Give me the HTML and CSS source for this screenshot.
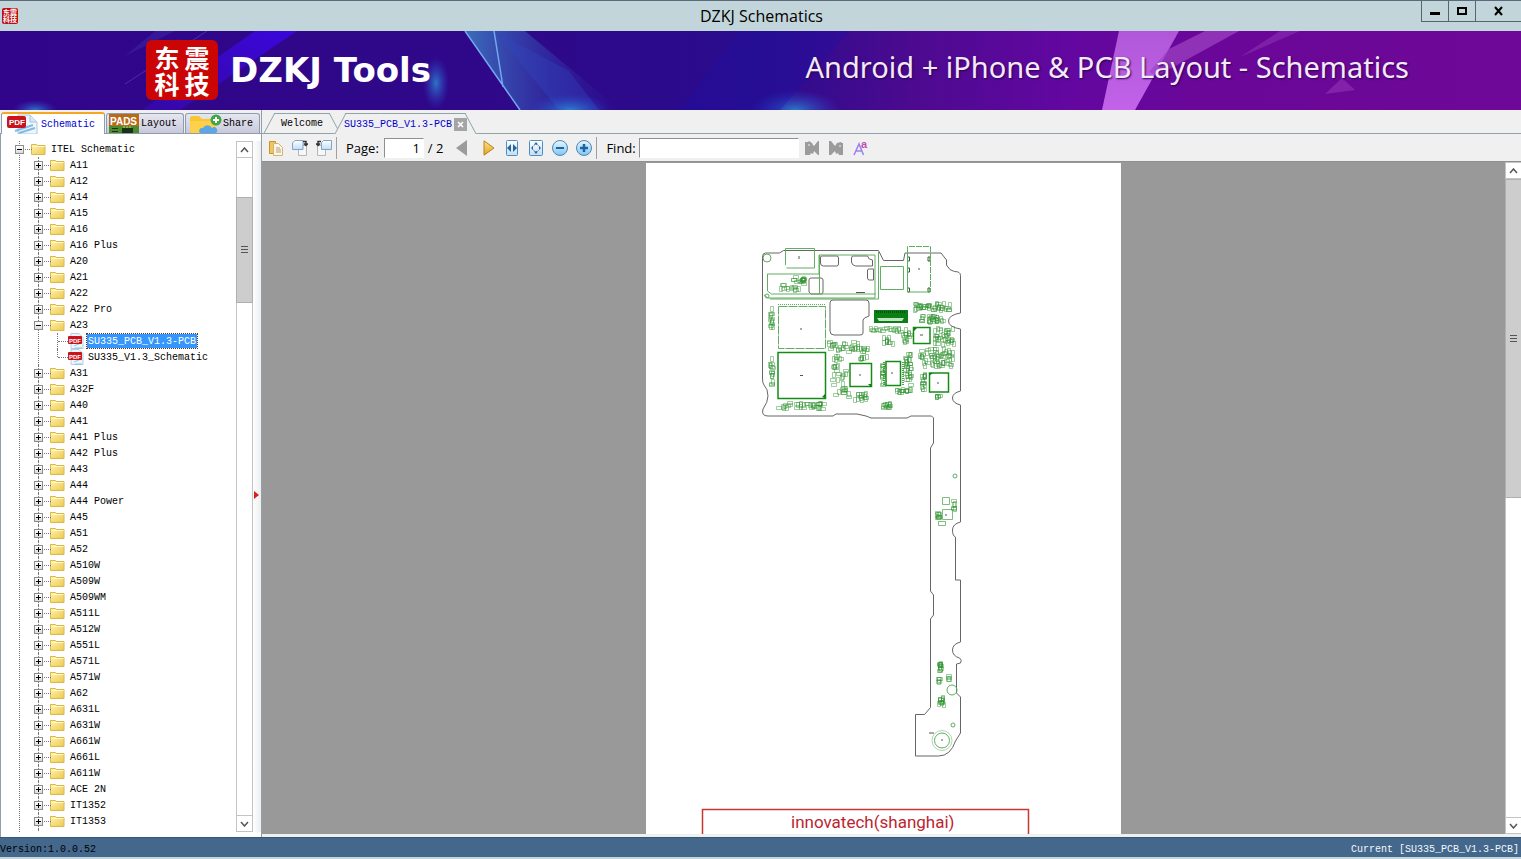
FILE: index.html
```html
<!DOCTYPE html>
<html lang="en">
<head>
<meta charset="utf-8">
<title>DZKJ Schematics</title>
<link rel="stylesheet" href="styles.css">
</head>
<body>
<svg class="defs" aria-hidden="true">
  <defs>
    <linearGradient id="gFold" x1="0" y1="0" x2="1" y2="1"><stop offset="0" stop-color="#fff3b0"/><stop offset="1" stop-color="#ecc94f"/></linearGradient>
    <linearGradient id="gBall" x1="0" y1="0" x2="0" y2="1"><stop offset="0" stop-color="#e9f6ff"/><stop offset="1" stop-color="#7fc4ee"/></linearGradient>
    <linearGradient id="gPage" x1="0" y1="0" x2="0" y2="1"><stop offset="0" stop-color="#fff"/><stop offset="1" stop-color="#c3dcf3"/></linearGradient>
    <linearGradient id="gGold" x1="0" y1="0" x2="0" y2="1"><stop offset="0" stop-color="#ffe28a"/><stop offset="1" stop-color="#e0a21c"/></linearGradient>
    <symbol id="folder" viewBox="0 0 15 13"><path d="M.5 1.500h5l1 1h7.500v9H.5z" fill="url(#gFold)" stroke="#dcb84a"/><path d="M1.500 3.500h12" stroke="#fff8cf"/></symbol>
    <symbol id="pdf" viewBox="0 0 16 16"><path d="M3 .5h8l4 4v11H3z" fill="#eef6fc" stroke="#b5cfe0"/><path d="M6 13l7-3M7 15h7" stroke="#8fc4e8"/><rect y="3" width="14" height="8" rx="1" fill="#c9141e"/><text x="1" y="9.500" font-family="Liberation Sans" font-size="6" font-weight="700" fill="#fff">PDF</text></symbol>
  </defs>
</svg>

<header class="titlebar">
  <div class="app-icon"><span>东震</span><span>科技</span></div>
  <h1>DZKJ Schematics</h1>
  <div class="win-buttons">
    <button aria-label="Minimize"><svg width="12" height="12"><path d="M1 8.500h10" stroke="#000" stroke-width="3"/></svg></button>
    <button aria-label="Maximize"><svg width="12" height="12"><path d="M2 3h8v6H2z" fill="none" stroke="#000" stroke-width="2"/></svg></button>
    <button class="close" aria-label="Close"><svg width="12" height="12"><path d="M2 2l7 8M9 2l-7 8" stroke="#000" stroke-width="2"/></svg></button>
  </div>
</header>

<section class="banner">
  <svg class="art" viewBox="0 0 1521 79" preserveAspectRatio="none" aria-hidden="true">
    <defs>
      <radialGradient id="glow"><stop offset="0" stop-color="#2b9ad8" stop-opacity=".75"/><stop offset="1" stop-color="#2b50d8" stop-opacity="0"/></radialGradient>
      <linearGradient id="tri" x1="0" y1="0" x2="1" y2="0"><stop offset="0" stop-color="#3f7fc4" stop-opacity=".85"/><stop offset="1" stop-color="#2b2bb0" stop-opacity="0"/></linearGradient>
      <linearGradient id="beam" x1="1" y1="0" x2="0" y2="1"><stop offset="0" stop-color="#3a06dc"/><stop offset="1" stop-color="#3a0ac4" stop-opacity=".5"/></linearGradient>
      <linearGradient id="pink" x1="0" y1="0" x2="0" y2="1"><stop offset="0" stop-color="#b057d8"/><stop offset="1" stop-color="#c263ea"/></linearGradient>
    </defs>
    <path d="M255 0h42L180 79h-38z" fill="url(#beam)"/>
    <path d="M207 0L125 53" stroke="#5a48c8" opacity=".6"/>
    <path d="M155 0h20l-50 25z" fill="#3f26a5" opacity=".5"/>
    <ellipse cx="436" cy="52" rx="13" ry="26" fill="url(#glow)"/>
    <ellipse cx="35" cy="79" rx="22" ry="10" fill="url(#glow)"/>
    <path d="M465 0h60l95 79H520z" fill="url(#tri)"/>
    <path d="M465 0l55 79M494 0l9 56" stroke="#72a9ee" stroke-width="1.500"/>
    <path d="M494 0l75 40 30 39h-40z" fill="#3149c0" opacity=".35"/>
    <ellipse cx="795" cy="79" rx="45" ry="20" fill="url(#glow)"/>
    <ellipse cx="570" cy="79" rx="40" ry="16" fill="url(#glow)"/>
    <path d="M740 0L680 79h100L850 0z" fill="#1c12a8" opacity=".3"/>
    <path d="M1119 0h60l-44 79h-33z" fill="url(#pink)"/>
    <path d="M1205 0h34l-82 45-8-4 20-23z" fill="#a045c4" opacity=".7"/>
    <path d="M1280 0h20l-60 26z" fill="#8b30b4" opacity=".6"/>
    <path d="M1342 47l13 12-30 4z" fill="#8b2db4" opacity=".7"/>
  </svg>
  <div class="logo"><span>东</span><span>震</span><span>科</span><span>技</span></div>
  <strong class="brand">DZKJ Tools</strong>
  <p class="tagline">Android + iPhone &amp; PCB Layout - Schematics</p>
</section>

<main class="workspace">
  <aside class="side">
    <nav class="side-tabs">
      <button class="side-tab active"><svg width="31" height="20"><path d="M11 1h12l7 7v12H11z" fill="#eef6fc" stroke="#a9c6da"/><path d="M23 1v7h7" fill="#d6e8f5" stroke="#a9c6da"/><path d="M8 17l18-6M12 19l16-5" stroke="#7fbce8" stroke-width="2"/><rect y="2" width="19" height="12" rx="2" fill="#c9141e"/><text x="2" y="11" class="pdf-label">PDF</text></svg>Schematic</button>
      <button class="side-tab"><svg width="30" height="19"><rect width="30" height="19" fill="#b86a1c"/><text x="1" y="11" class="pads-label">PADS</text><path d="M0 12h30v7H0z" fill="#4a8b2c"/><path d="M13 14h11v5H13zM3 14h6v1H3zM3 17h6v1H3z" fill="#193415"/><path d="M15 12v2M18 12v2M21 12v2" stroke="#d5c46b"/></svg>Layout</button>
      <button class="side-tab share"><svg width="32" height="19"><path d="M0 4q0-2 2-2h7l3 3h14v14H0z" fill="#fbc531"/><path d="M0 7h26v12H2q-2 0-2-2z" fill="#ffd04a"/><path d="M10 19a3 3 0 0 1 3-5 5 5 0 0 1 9 0 3 3 0 0 1 4 5z" fill="#5ba6e6"/><circle cx="26" cy="6" r="5.500" fill="#3fa648"/><path d="M26 3v6M23 6h6" stroke="#fff" stroke-width="2"/></svg>Share</button>
    </nav>
    <div class="tree-pane">
      <ul class="tree" id="tree"></ul>
      <div class="scroll side-scroll">
        <button aria-label="Scroll up"><svg width="9" height="6"><path d="M1 5l3.500-4L8 5" fill="none" stroke="#555" stroke-width="1.500"/></svg></button>
        <div class="track"><div class="thumb"><i></i></div></div>
        <button aria-label="Scroll down"><svg width="9" height="6"><path d="M1 1l3.500 4L8 1" fill="none" stroke="#555" stroke-width="1.500"/></svg></button>
      </div>
      <div class="splitter"><svg width="5" height="8"><path d="M0 0l5 4-5 4z" fill="#d8201a"/></svg></div>
    </div>
  </aside>

  <section class="content">
    <nav class="doc-tabs">
      <button class="doc-tab">Welcome</button>
      <div class="doc-tab active"><a href="#doc">SU335_PCB_V1.3-PCB</a><button class="tab-close" aria-label="Close tab"><svg width="13" height="13"><rect width="13" height="13" fill="#a5a5a5"/><path d="M4 4l5 5M9 4l-5 5" stroke="#fff" stroke-width="1.500"/></svg></button></div>
    </nav>
    <div class="toolbar">
      <button aria-label="Open"><svg width="16" height="16"><path d="M1.500 1.500h6v12h-6z" fill="#f3c55c" stroke="#c8922d"/><path d="M5.500 3.500h5l4 4v8h-9z" fill="#fff6df" stroke="#d3b27a"/><path d="M8 8h4M8 10h5M8 12h5" stroke="#a9a08c"/></svg></button>
      <button aria-label="Rotate left"><svg width="16" height="16"><path d="M6.500 5.500h8v10h-8z" fill="#f7f7f7" stroke="#b4b8bd"/><path d="M3 .5h8v9H.5V3z" fill="url(#gPage)" stroke="#7fa3c9"/><path d="M11 1.500h3v3M12 3.500l2 2 2-2" fill="none" stroke="#333" stroke-width="1.500"/></svg></button>
      <button aria-label="Rotate right"><svg width="16" height="16"><path d="M1.500 5.500h8v10h-8z" fill="#f7f7f7" stroke="#b4b8bd"/><path d="M7.500 .5h8v9h-10V2.500z" fill="url(#gPage)" stroke="#7fa3c9"/><path d="M5 1.500H2v3M0 3.500l2 2 2-2" fill="none" stroke="#333" stroke-width="1.500"/></svg></button>
      <span class="sep"></span>
      <label for="page">Page:</label>
      <input id="page" class="page-input" type="text" value="1">
      <span class="pages">/ 2</span>
      <button class="prev" aria-label="Previous page"><svg width="12" height="16"><path d="M11 0v16L0 8z" fill="#9b9b9b"/></svg></button>
      <button class="next" aria-label="Next page"><svg width="12" height="16"><path d="M1 .8v14.400L11 8z" fill="url(#gGold)" stroke="#b98418"/></svg></button>
      <button aria-label="Fit width"><svg width="16" height="16"><rect x="2.500" y=".5" width="11" height="15" rx="1" fill="url(#gPage)" stroke="#4f8cc4"/><path d="M7 4v8L3 8zM9 4v8l4-4z" fill="#27659e"/></svg></button>
      <button aria-label="Fit page"><svg width="16" height="16"><rect x="1.500" y=".5" width="13" height="15" rx="1" fill="url(#gPage)" stroke="#4f8cc4"/><path d="M8 2l2 2.500H6zM8 14l2-2.500H6zM3 8l2-2v4zM13 8l-2-2v4z" fill="#27659e"/><circle cx="8" cy="8" r="3.500" fill="none" stroke="#27659e" stroke-dasharray="1 1"/></svg></button>
      <button aria-label="Zoom out"><svg width="16" height="16"><circle cx="8" cy="8" r="7.500" fill="url(#gBall)" stroke="#4a88b8"/><path d="M4 8h8" stroke="#1b65a5" stroke-width="2"/></svg></button>
      <button aria-label="Zoom in"><svg width="16" height="16"><circle cx="8" cy="8" r="7.500" fill="url(#gBall)" stroke="#4a88b8"/><path d="M4 8h8M8 4v8" stroke="#1b65a5" stroke-width="2.500"/></svg></button>
      <span class="sep"></span>
      <label for="find">Find:</label>
      <input id="find" class="find-input" type="text">
      <button aria-label="Find previous"><svg width="16" height="16"><path d="M1 2h3l1-1 3 2 1 2 1 1 4-5h1v14h-1l-4-4-1 3-2-1-1 2H1z" fill="#9b9b9b"/><circle cx="5" cy="5" r="1" fill="#d5d5d5"/></svg></button>
      <button aria-label="Find next"><svg width="16" height="16"><path d="M15 3h-1l-1-1-4 1-2 3L3 1H1v14h2l4-4 1 3 2-1 1 2h4z" fill="#9b9b9b"/><circle cx="12" cy="6" r="1" fill="#d5d5d5"/></svg></button>
      <button aria-label="Match case"><svg width="16" height="18"><path d="M2 16L7 5l4.500 11M4 12h6" fill="none" stroke="#9a82ee" stroke-width="1.500"/><text x="9" y="9" class="case-label">a</text></svg></button>
    </div>
    <div class="viewer" id="doc">
      <div class="stage">
        <svg class="sheet" viewBox="646 163 475 671" aria-label="SU335 PCB layout">
          <rect x="646" y="163" width="475" height="671" fill="#fff"/>
          <g fill="none" stroke="#666">
            <path d="M762.500 257q0-4 3-4h14l4-2.500h95l5 10h20l1.500-7.500H941l5.500 7v5q3 6 8 6.500 6 0 6 4V313q-12 2-12 8t12 8V391q-8 2-8 7t8 7V522q-8 2-8 8t3 7v43h5v62q-8 2-8 8t7 8q3 2 1 5l-4 1v29l4 4v36l-5 8q-5 15-17 15H915.500V714.500h9l6-7V619l3-4V595l-3-4V448l3-5V418l-2-2H911l-4 2H871l-5-2-9-2H836l-3 2H768q-7 0-5-7 5-7 5-13 0-7-4-11-1.500-2-1.500-6z"/>
            <path d="M820.500 257q0-1 2-1h14q2 0 2 2v6q0 2-2 2h-13q-3 0-3-3zM851.500 258q0-2 2-2h14q1 4 5 4v6h-17q-4-1-4-4zM809 280q0-2 2-2h10q2 0 2 2v12q0 2-2 2h-10l-2-2zM867.500 270q0-1 2-1h4v11h-4q-2 0-2-2z"/>
            <path d="M830 303q0-3 3-3h33q3 0 3 3v13q-6 2-6 4v13q0 2-3 2h-26q-4 0-4-4z"/>
            <path d="M907.500 257h2v4h-2zM928 257h2v4h-2zM907.500 268h2v4h-2zM907.500 288h2v4h-2zM928 288h2v4h-2z" stroke="#286b28"/>
          </g>
          <g fill="none" stroke="#61ad61">
            <circle cx="767" cy="258" r="4"/><circle cx="767" cy="296" r="2"/>
            <path d="M785.500 265V248.500h29V268h-28M767.500 274H819v-19h56v43H768l-4-3M767.500 274v17l4 3h104M819.500 255v39M878.500 252v47H770M880.500 266.500h23v23h-23zM907.500 252v40h22"/>
            <path d="M907.500 252v-5.500h23V292" stroke-dasharray="6 1"/>
            <path d="M778.500 306.500h47v42h-47z" stroke-dasharray="9 1"/><path d="M778 304.500h48" stroke-dasharray="1 1"/>
            <circle cx="955" cy="476" r="2"/><circle cx="952" cy="690" r="5"/><circle cx="953" cy="725" r="2"/>
            <circle cx="942" cy="740.500" r="7.500"/><circle cx="942" cy="740.500" r="10" opacity=".5"/>
            <path d="M942.500 497.500h7v7h-7zM942.500 509.500h10v10h-10zM938.500 521.500h7v4h-7z" opacity=".8"/>
          </g>
          <g fill="none" stroke="#168a16" stroke-width="1.500">
            <path d="M778 352.500h47.500v46H778zM850 363.500h21.500v23H850zM886 361.500h14.500v24H886zM913.500 327.500h16.500v16h-16.500zM929.500 373h19v19h-19z"/>
            <path d="M884 362v23M903 362v23" stroke-dasharray="1 1"/>
          </g>
          <path d="M874 310h34v13h-34z" fill="#0b7f16"/><path d="M877 318h27l-2 3h-23z" fill="#bfe3bf"/><path d="M876 312h30" stroke="#054f0b" stroke-width="2" stroke-dasharray="1 1"/>
          <path d="M822 397l3-3v4zM929 373h4l-4 3zM914 328h3l-3 3zM868 384h3v3z" fill="#0b7f16"/>
          <g id="parts" fill="none" stroke="#2f932f"></g>
          <path d="M800 375.500h3M801 328v2M799 256v3M860 374v2M892 372v2M920 335h3M938 382v2M918 269h2M946 514v2M942 739v2M856 292.500h9M929 733h5" stroke="#555"/>
          <path d="M702.500 834V809.500h326V834" fill="none" stroke="#c23a32" stroke-width="1.500"/>
          <text x="791" y="828" class="maker">innovatech(shanghai)</text>
        </svg>
      </div>
      <div class="scroll main-scroll">
        <button aria-label="Scroll up"><svg width="9" height="6"><path d="M1 5l3.500-4L8 5" fill="none" stroke="#555" stroke-width="1.500"/></svg></button>
        <div class="track"><div class="thumb"><i></i></div></div>
        <button aria-label="Scroll down"><svg width="9" height="6"><path d="M1 1l3.500 4L8 1" fill="none" stroke="#555" stroke-width="1.500"/></svg></button>
      </div>
    </div>
  </section>
</main>

<footer class="status"><span>Version:1.0.0.52</span><span class="current">Current [SU335_PCB_V1.3-PCB]</span></footer>
<script src="app.js"></script>
</body>
</html>
```

FILE: styles.css
```css
* { box-sizing: border-box; }
body {
  margin: 0;
  height: 100vh;
  display: flex;
  flex-direction: column;
  overflow: hidden;
  background: #c2d5da;
  font-family: "Open Sans", "Noto Sans", sans-serif;
  font-size: 13px;
  color: #000;
}
button { border: 0; padding: 0; background: none; font: inherit; color: inherit; }
a { color: inherit; text-decoration: none; }
svg { display: block; flex: none; }
.defs { position: absolute; width: 0; height: 0; }

.titlebar {
  height: 31px;
  flex: none;
  display: grid;
  grid-template-columns: 1fr auto 1fr;
  align-items: center;
  border-top: 1px solid #5b6a7a;
  padding-left: 2px;
}
.titlebar h1 { margin: 0; font-size: 16px; line-height: 28px; font-weight: 400; }
.app-icon {
  width: 16px;
  height: 16px;
  border-radius: 2px;
  background: #c00a10;
  color: #fff;
  font: 700 7px/7px "Noto Sans CJK SC", sans-serif;
  display: flex;
  flex-direction: column;
  align-items: center;
  justify-content: center;
}
.win-buttons { display: flex; justify-self: end; align-self: start; }
.win-buttons button {
  width: 27px;
  height: 21px;
  display: flex;
  align-items: center;
  justify-content: center;
  border: solid #56646e;
  border-width: 0 0 1px 1px;
}
.win-buttons .close { width: 46px; }

.banner {
  position: relative;
  height: 79px;
  flex: none;
  display: flex;
  align-items: center;
  padding: 0 112px 0 146px;
  background: linear-gradient(90deg, #31058a 0%, #2f0889 30%, #2a0c8c 50%, #4c0a90 60%, #6207a0 70%, #6b0798 80%, #6d0898 100%);
  color: #fff;
}
.art { position: absolute; inset: 0; width: 100%; height: 100%; }
.logo, .brand, .tagline { position: relative; }
.logo {
  width: 72px;
  height: 60px;
  margin-bottom: 2px;
  border-radius: 6px;
  background: #cb0505;
  font: 700 25px/26px "Noto Sans CJK SC", sans-serif;
  display: grid;
  grid-template-columns: auto auto;
  column-gap: 5px;
  place-content: center;
}
.brand { margin: 0 0 2px 12px; font: 700 34px/40px "DejaVu Sans", "Noto Sans", sans-serif; }
.tagline {
  margin: 0 0 8px auto;
  font: 400 29px/40px "Noto Sans", sans-serif;
  color: #f4e9fb;
  text-shadow: 1px 1px 2px #2a0050;
}

.workspace { flex: 1; min-height: 0; display: flex; background: #f0f0f0; }
.side { width: 262px; flex: none; display: flex; flex-direction: column; border-right: 1px solid #8ea0aa; }
.side-tabs { height: 24px; flex: none; display: flex; align-items: flex-end; gap: 1px; padding-left: 1px; border-bottom: 1px solid #8d9db0; }
.side-tab, .doc-tab, .tree, .status { font-family: "Liberation Mono", monospace; font-size: 10px; }
.side-tab {
  height: 20px;
  width: 78px;
  display: flex;
  align-items: center;
  gap: 2px;
  padding-left: 2px;
  border: 1px solid #8d9db0;
  border-bottom: 0;
  border-radius: 3px 3px 0 0;
  background: linear-gradient(#e6e6f0, #c9c9dc);
}
.side-tab.active { width: 104px; height: 22px; gap: 3px; padding-left: 5px; background: #fff; border-top: 2px solid #f5a623; color: #0000d0; margin-bottom: -1px; }
.side-tab.share { width: 75px; padding-left: 4px; gap: 1px; }
.pdf-label, .pads-label, .case-label { font-family: "Liberation Sans", sans-serif; font-weight: 700; fill: #fff; }
.pdf-label { font-size: 8px; }
.pads-label { font-size: 10px; }
.case-label { font-size: 11px; fill: #c250b0; }

.tree-pane { flex: 1; min-height: 0; display: flex; padding: 7px 0 5px 1px; background: #fff; border-left: 1px solid #8ea0aa; }
.tree, .tree ul { list-style: none; margin: 0; padding: 0; }
.tree { flex: 1; min-width: 0; overflow: hidden; padding-left: 13px; line-height: 16px; position: relative; }
.tree::before { content: ""; position: absolute; left: 17px; top: 0; bottom: 0; border-left: 1px dotted #777; }
.tree li ul { padding-left: 19px; }
.tree li { position: relative; }
.row { height: 16px; display: flex; align-items: center; position: relative; white-space: nowrap; }
.row .icon { width: 15px; height: 13px; margin: 0 4px 0 7px; }
.row::before { content: ""; position: absolute; left: 10px; width: 7px; top: 8px; border-top: 1px dotted #777; }
.toggle { width: 9px; height: 9px; border: 1px solid #8c8c8c; background: linear-gradient(#fff, #dcdcdc); position: relative; z-index: 1; }
.toggle::before { content: ""; position: absolute; left: 1px; right: 1px; top: 3px; border-top: 1px solid #000; }
.toggle.plus::after { content: ""; position: absolute; top: 1px; bottom: 1px; left: 3px; border-left: 1px solid #000; }
.tree ul > li::before { content: ""; position: absolute; left: 4px; top: 0; bottom: 0; border-left: 1px dotted #777; }
.tree ul ul > li:last-child::before { bottom: 8px; }
.tree ul ul .row { padding-left: 15px; }
.tree ul ul .row::before { left: 5px; width: 10px; }
.tree ul ul .icon { width: 16px; height: 16px; margin: 0 3px 0 0; }
.row a { padding: 2px 1px 0; line-height: 12px; }
.row a.selected { background: #3597fd; color: #fff; outline: 1px dotted #533; }

.scroll { display: flex; flex-direction: column; flex: none; width: 17px; border: 1px solid #c4c4c4; background: #fff; }
.scroll button { height: 16px; flex: none; display: flex; align-items: center; justify-content: center; border-bottom: 1px solid #c4c4c4; }
.scroll button:last-child { border: 0; border-top: 1px solid #c4c4c4; }
.track { flex: 1; position: relative; }
.thumb { position: absolute; left: -1px; right: -1px; display: flex; align-items: center; justify-content: center; background: #cdcdcd; border: 1px solid #b0b0b0; }
.thumb i { width: 7px; height: 8px; background: repeating-linear-gradient(#555 0 1px, transparent 1px 3px); }
.side-scroll .thumb { top: 6%; height: 16%; }
.main-scroll .thumb { top: 0; height: 50%; }
.splitter { width: 8px; flex: none; display: flex; align-items: center; justify-content: flex-end; background: linear-gradient(90deg, #fff, #eee); padding: 16px 2px 0 0; }

.content { flex: 1; min-width: 0; display: flex; flex-direction: column; }
.doc-tabs { height: 24px; flex: none; display: flex; align-items: flex-end; gap: 5px; padding-left: 7px; border-bottom: 1px solid #8fa3a8; }
.doc-tab { position: relative; z-index: 0; height: 20px; display: flex; align-items: center; padding: 1px 12px 0; }
.doc-tab::before, .doc-tab::after { content: ""; position: absolute; z-index: -1; top: 0; bottom: 0; border-top: 1px solid #8fa3a8; background: #f0f0f0; }
.doc-tab::before { left: 0; right: 35%; border-left: 1px solid #8fa3a8; transform: skewX(-28deg); }
.doc-tab::after { right: 0; left: 35%; border-right: 1px solid #8fa3a8; transform: skewX(28deg); }
.doc-tab.active { height: 21px; margin-bottom: -1px; padding: 1px 3px 0 4px; gap: 2px; color: #0000d0; }

.toolbar { height: 28px; flex: none; display: flex; align-items: center; gap: 8px; padding-left: 6px; border-bottom: 1px solid #8f8f8f; }
.toolbar .sep { width: 1px; height: 22px; background: #a0a0a0; margin: 0 1px 0 -4px; }
.toolbar label, .pages { line-height: 20px; }
.toolbar input { height: 20px; border: 1px solid #fff; border-color: #8f8f8f #fff #fff #8f8f8f; background: #fff; font: inherit; padding: 0 3px; margin-left: -3px; outline: 0; }
.toolbar .page-input { width: 40px; text-align: right; }
.toolbar .find-input { width: 160px; margin: 0 -3px 0 -5px; }
.pages { margin-left: -4px; }
.prev { margin-left: 5px; }
.next { margin: 0 1px 0 7px; }

.viewer { flex: 1; min-height: 0; display: flex; background: #999; margin-bottom: 3px; }
.stage { flex: 1; min-width: 0; min-height: 0; overflow: hidden; display: flex; justify-content: center; padding-top: 1px; }
.sheet { height: 100%; max-width: 100%; }
.maker { font: 400 17px Roboto, sans-serif; fill: #bc2530; }
.main-scroll { width: 16px; border-right: 0; }

.status { height: 20px; flex: none; display: flex; align-items: center; justify-content: space-between; padding: 4px 2px 0 0; margin-bottom: 2px; background: #44678c; border-top: 1px solid #355677; }
.status .current { color: #f3f8fb; }
```

FILE: app.js
```js
const SVG = "http://www.w3.org/2000/svg";
const models = ["A11", "A12", "A14", "A15", "A16", "A16 Plus", "A20", "A21", "A22", "A22 Pro", "A23",
  "A31", "A32F", "A40", "A41", "A41 Plus", "A42 Plus", "A43", "A44", "A44 Power", "A45", "A51", "A52",
  "A510W", "A509W", "A509WM", "A511L", "A512W", "A551L", "A571L", "A571W", "A62", "A631L", "A631W",
  "A661W", "A661L", "A611W", "ACE 2N", "IT1352", "IT1353", ""];
const files = { A23: ["SU335_PCB_V1.3-PCB", "SU335_V1.3_Schematic"] };

function row(label, icon, toggle, selected) {
  const btn = toggle ? `<button class="toggle ${toggle}" aria-label="Toggle ${label}"></button>` : "";
  return `<div class="row">${btn}<svg class="icon"><use href="#${icon}"/></svg><a href="#doc"${selected ? ' class="selected"' : ""}>${label}</a></div>`;
}
function folder(name) {
  const kids = files[name];
  if (!kids) return `<li>${row(name, "folder", "plus")}</li>`;
  return `<li>${row(name, "folder", "minus")}<ul>${kids.map((f, i) => `<li>${row(f, "pdf", "", i === 0)}</li>`).join("")}</ul></li>`;
}
document.getElementById("tree").innerHTML =
  `<li>${row("ITEL Schematic", "folder", "minus")}<ul>${models.map(folder).join("")}</ul></li>`;

// Small board components: x, y, width, height, count of each cluster
const clusters = [
  [768, 305, 6, 26, 12], [768, 350, 7, 38, 14], [776, 401, 50, 9, 34], [778, 283, 24, 9, 12], [788, 275, 18, 8, 8],
  [827, 340, 44, 13, 34], [830, 354, 40, 8, 12], [830, 362, 18, 36, 26], [846, 389, 25, 14, 16],
  [868, 326, 40, 7, 18], [878, 335, 16, 12, 10], [880, 362, 4, 24, 12], [903, 352, 10, 34, 30],
  [912, 301, 40, 11, 38], [918, 314, 28, 10, 26], [932, 326, 24, 22, 34], [900, 330, 12, 14, 12],
  [918, 346, 36, 22, 56], [920, 372, 7, 20, 14], [893, 387, 20, 7, 14], [881, 401, 12, 8, 12],
  [934, 394, 9, 4, 5], [935, 510, 6, 9, 8], [951, 498, 5, 14, 6], [937, 661, 6, 11, 12],
  [936, 676, 6, 10, 5], [946, 673, 5, 9, 4], [937, 695, 8, 12, 12], [800, 276, 6, 10, 8]
];
let seed = 7;
const rnd = () => (seed = (seed * 16807) % 2147483647) / 2147483647;
let d = "";
for (const [x, y, w, h, n] of clusters) {
  for (let i = 0; i < n; i++) {
    const flip = rnd() > 0.5;
    const a = flip ? 3 : 5, b = flip ? 5 : 3;
    d += `M${Math.round(x + rnd() * Math.max(0, w - a)) + 0.5} ${Math.round(y + rnd() * Math.max(0, h - b)) + 0.5}h${a}v${b}h-${a}z`;
  }
}
const p = document.createElementNS(SVG, "path");
p.setAttribute("d", d);
p.setAttribute("opacity", "0.45");
document.getElementById("parts").appendChild(p);
```
